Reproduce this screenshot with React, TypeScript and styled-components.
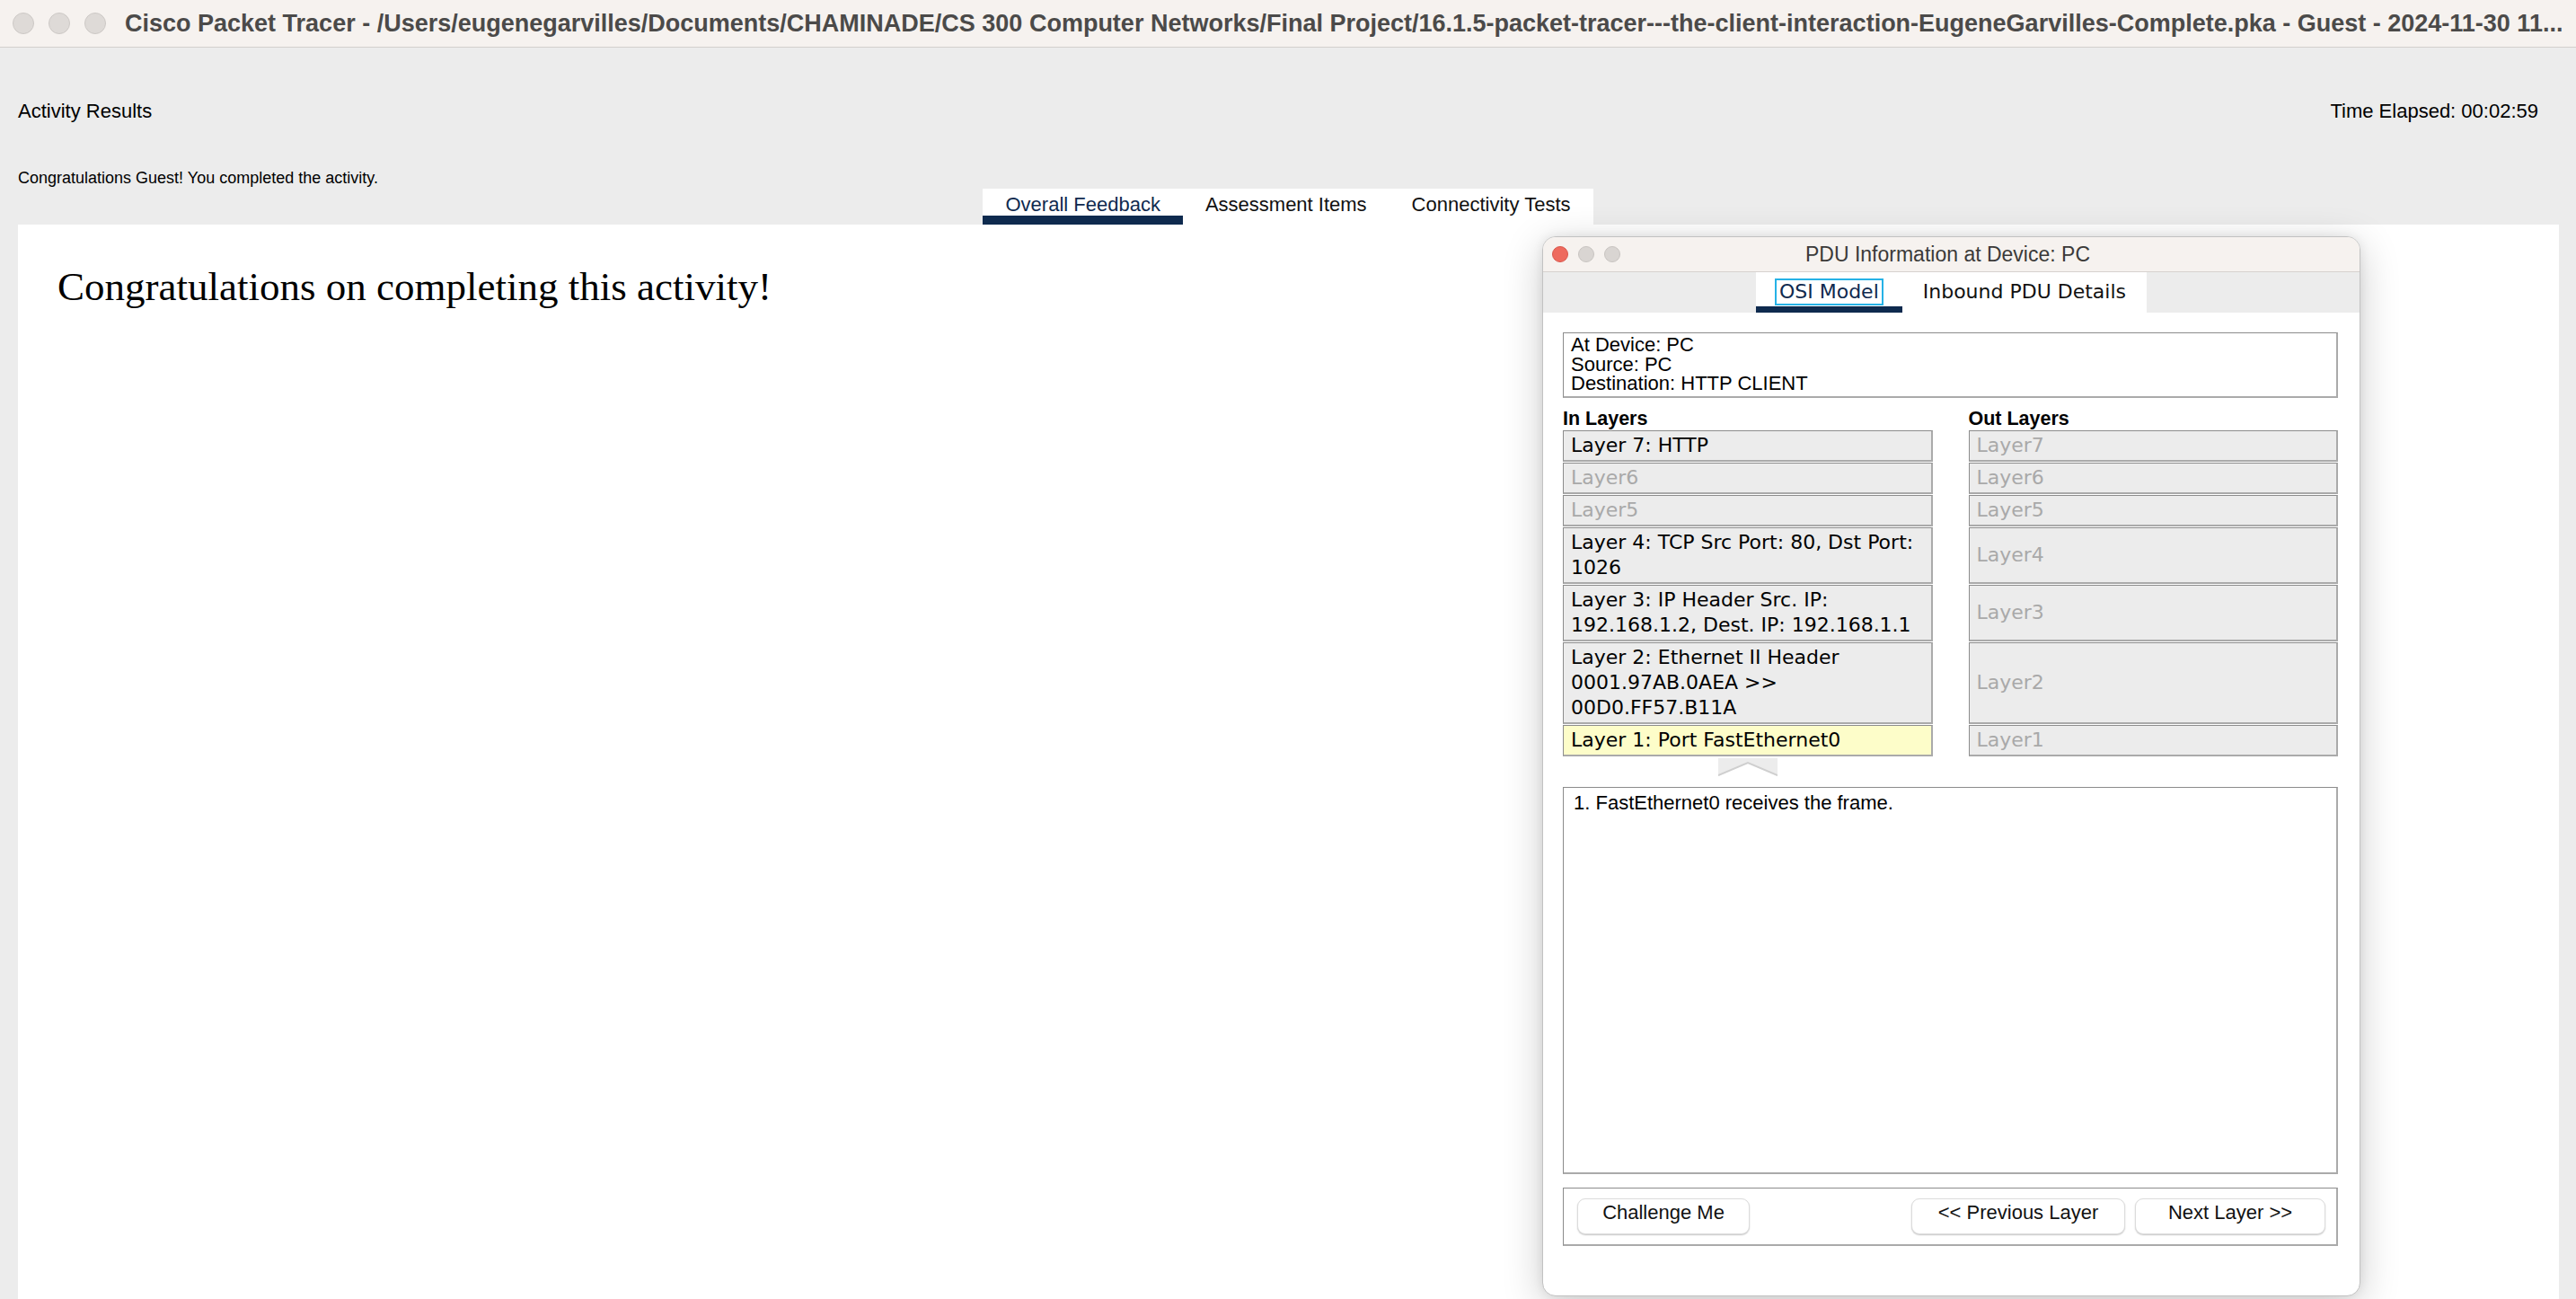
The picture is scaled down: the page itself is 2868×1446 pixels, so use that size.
import styled, { createGlobalStyle } from "styled-components";

const GlobalStyle = createGlobalStyle`
  html, body {
    margin: 0;
    padding: 0;
  }
  body {
    width: 2868px;
    height: 1446px;
    overflow: hidden;
    background: #ececec;
    font-family: "Liberation Sans", Arial, sans-serif;
    color: #000;
  }
  * {
    box-sizing: border-box;
  }
`;

const Screen = styled.div`
  position: relative;
  width: 2868px;
  height: 1446px;
  display: flex;
  flex-direction: column;
  background: #ececec;
  overflow: hidden;
`;

const WindowBar = styled.div`
  height: 53px;
  flex-shrink: 0;
  display: flex;
  align-items: center;
  padding-left: 14px;
  background: #f6f2ef;
  border-bottom: 1px solid #d3cfcc;
`;

const Lights = styled.div<{ $gap: number }>`
  display: flex;
  align-items: center;
  gap: ${(p) => p.$gap}px;
  flex-shrink: 0;
`;

const Light = styled.span<{ $size: number; $color: string; $edge: string }>`
  width: ${(p) => p.$size}px;
  height: ${(p) => p.$size}px;
  border-radius: 50%;
  background: ${(p) => p.$color};
  border: 1px solid ${(p) => p.$edge};
`;

const WindowTitle = styled.div`
  margin-left: 21px;
  font-size: 27px;
  font-weight: 700;
  color: #4b4a49;
  white-space: nowrap;
  overflow: hidden;
`;

const Header = styled.header`
  height: 157px;
  flex-shrink: 0;
  display: flex;
  flex-direction: column;
  padding: 0 42px 0 20px;
`;

const HeaderRow = styled.div`
  margin-top: 58px;
  display: flex;
  justify-content: space-between;
  align-items: center;
  font-size: 22px;
  line-height: 26px;
`;

const Notice = styled.div`
  margin-top: 50px;
  font-size: 18px;
  line-height: 22px;
`;

const TabRow = styled.nav`
  height: 40px;
  flex-shrink: 0;
  display: flex;
  justify-content: center;
`;

const Tab = styled.div<{ $active?: boolean }>`
  height: 40px;
  padding: 5px 25px 0;
  background: #fff;
  font-size: 22px;
  line-height: 26px;
  color: ${(p) => (p.$active ? "#0f2a4f" : "#111")};
  border-bottom: 10px solid ${(p) => (p.$active ? "#0e2a4e" : "#fff")};
`;

const Content = styled.main`
  flex: 1;
  margin: 0 19px 0 20px;
  background: #fff;
  padding: 44px 44px;
`;

const Heading = styled.h1`
  margin: 0;
  font-family: "Liberation Serif", "Times New Roman", serif;
  font-weight: 400;
  font-size: 45px;
  line-height: 51px;
`;

/* floating PDU window */
const Dialog = styled.section`
  position: absolute;
  left: 1717px;
  top: 263px;
  width: 911px;
  height: 1180px;
  display: flex;
  flex-direction: column;
  background: #fff;
  border: 1px solid #c2c2c2;
  border-radius: 15px;
  overflow: hidden;
  box-shadow: 0 10px 45px rgba(0, 0, 0, 0.2), 0 0 12px rgba(0, 0, 0, 0.08);
`;

const DialogBar = styled.div`
  height: 39px;
  flex-shrink: 0;
  display: grid;
  grid-template-columns: 1fr auto 1fr;
  align-items: center;
  padding: 0 10px;
  background: #f6f2ef;
  border-bottom: 1px solid #d6d2cf;
`;

const DialogTitle = styled.div`
  font-size: 23px;
  color: #3b3a39;
  white-space: nowrap;
  margin-right: 8px;
`;

const DialogTabs = styled.div`
  height: 45px;
  flex-shrink: 0;
  display: flex;
  justify-content: center;
  background: #ececec;
`;

const DTab = styled.div<{ $active?: boolean }>`
  height: 45px;
  padding: 9px 23px 0;
  background: #fff;
  font-family: "DejaVu Sans", Verdana, sans-serif;
  font-size: 22px;
  line-height: 26px;
  color: ${(p) => (p.$active ? "#0f2a4f" : "#111")};
  border-bottom: 7px solid ${(p) => (p.$active ? "#0e2a4e" : "#fff")};
`;

const Focus = styled.span`
  display: inline-block;
  padding: 0 3px;
  line-height: 26px;
  outline: 2px solid #26b2e6;
`;

const DialogBody = styled.div`
  flex: 1;
  display: flex;
  flex-direction: column;
  padding: 22px 24px 0 22px;
`;

const Inset = styled.div`
  border-style: solid;
  border-color: #8c8c8c #aaaaaa #aaaaaa #8c8c8c;
  border-width: 1px 2px 2px 1px;
`;

const InfoBox = styled(Inset)`
  padding: 2px 8px 3px;
  font-size: 22px;
  line-height: 21.5px;
`;

const LayerGrid = styled.div`
  margin-top: 11px;
  display: grid;
  grid-template-columns: 1fr 1fr;
  column-gap: 40px;
  row-gap: 1px;
`;

const ColumnLabel = styled.div`
  font-size: 21.5px;
  font-weight: 700;
  line-height: 24px;
`;

const LayerCell = styled(Inset)<{ $muted?: boolean; $hot?: boolean }>`
  display: flex;
  align-items: center;
  padding: 2px 8px;
  background: ${(p) => (p.$hot ? "#fdfdc9" : "#ececec")};
  color: ${(p) => (p.$muted ? "#a9a9a9" : "#000")};
  font-family: "DejaVu Sans", Verdana, sans-serif;
  font-size: 22px;
  line-height: 28px;
  white-space: nowrap;
  overflow: hidden;
`;

const Chevron = styled.svg`
  grid-column: 1;
  justify-self: center;
  margin-top: 1px;
  display: block;
`;

const MessageBox = styled(Inset)`
  margin-top: 12px;
  height: 431px;
  flex-shrink: 0;
  padding: 4px 11px;
  font-size: 22px;
  line-height: 26px;
`;

const ButtonBar = styled(Inset)`
  margin-top: 15px;
  height: 65px;
  flex-shrink: 0;
  display: flex;
  align-items: center;
  gap: 11px;
  padding: 0 12px 0 15px;
`;

const Button = styled.button<{ $w: number; $push?: boolean }>`
  width: ${(p) => p.$w}px;
  height: 40px;
  margin-left: ${(p) => (p.$push ? "auto" : "0")};
  padding: 0 0 7px;
  background: #fff;
  border: 1px solid #dcdcdc;
  border-radius: 9px;
  box-shadow: 0 1px 1.5px rgba(0, 0, 0, 0.22);
  font-family: "Liberation Sans", Arial, sans-serif;
  font-size: 22px;
  color: #111;
`;

type Layer = { text: string[]; muted?: boolean; hot?: boolean };

const rows: { inL: Layer; outL: string }[] = [
  { inL: { text: ["Layer 7: HTTP"] }, outL: "Layer7" },
  { inL: { text: ["Layer6"], muted: true }, outL: "Layer6" },
  { inL: { text: ["Layer5"], muted: true }, outL: "Layer5" },
  { inL: { text: ["Layer 4: TCP Src Port: 80, Dst Port:", "1026"] }, outL: "Layer4" },
  {
    inL: { text: ["Layer 3: IP Header Src. IP:", "192.168.1.2, Dest. IP: 192.168.1.1"] },
    outL: "Layer3",
  },
  {
    inL: { text: ["Layer 2: Ethernet II Header", "0001.97AB.0AEA >>", "00D0.FF57.B11A"] },
    outL: "Layer2",
  },
  { inL: { text: ["Layer 1: Port FastEthernet0"], hot: true }, outL: "Layer1" },
];

const LayerText = ({ lines }: { lines: string[] }) => (
  <div>
    {lines.map((l, i) => (
      <div key={i}>{l}</div>
    ))}
  </div>
);

export default function App() {
  return (
    <>
      <GlobalStyle />
      <Screen>
        <WindowBar>
          <Lights $gap={16}>
            <Light $size={24} $color="#dedad7" $edge="#cdc9c6" />
            <Light $size={24} $color="#dedad7" $edge="#cdc9c6" />
            <Light $size={24} $color="#dedad7" $edge="#cdc9c6" />
          </Lights>
          <WindowTitle>
            Cisco Packet Tracer - /Users/eugenegarvilles/Documents/CHAMINADE/CS 300 Computer
            Networks/Final Project/16.1.5-packet-tracer---the-client-interaction-EugeneGarvilles-Complete.pka
            - Guest - 2024-11-30 11...
          </WindowTitle>
        </WindowBar>

        <Header>
          <HeaderRow>
            <span>Activity Results</span>
            <span>Time Elapsed: 00:02:59</span>
          </HeaderRow>
          <Notice>Congratulations Guest! You completed the activity.</Notice>
        </Header>

        <TabRow>
          <Tab $active>Overall Feedback</Tab>
          <Tab>Assessment Items</Tab>
          <Tab>Connectivity Tests</Tab>
        </TabRow>

        <Content>
          <Heading>Congratulations on completing this activity!</Heading>
        </Content>

        <Dialog>
          <DialogBar>
            <Lights $gap={11}>
              <Light $size={18} $color="#ee6a5e" $edge="#d9584d" />
              <Light $size={18} $color="#d9d5d2" $edge="#c8c4c1" />
              <Light $size={18} $color="#d9d5d2" $edge="#c8c4c1" />
            </Lights>
            <DialogTitle>PDU Information at Device: PC</DialogTitle>
            <span />
          </DialogBar>

          <DialogTabs>
            <DTab $active>
              <Focus>OSI Model</Focus>
            </DTab>
            <DTab>Inbound PDU Details</DTab>
          </DialogTabs>

          <DialogBody>
            <InfoBox>
              <div>At Device: PC</div>
              <div>Source: PC</div>
              <div>Destination: HTTP CLIENT</div>
            </InfoBox>

            <LayerGrid>
              <ColumnLabel>In Layers</ColumnLabel>
              <ColumnLabel>Out Layers</ColumnLabel>
              {rows.map((r, i) => [
                <LayerCell key={`in-${i}`} $muted={r.inL.muted} $hot={r.inL.hot}>
                  <LayerText lines={r.inL.text} />
                </LayerCell>,
                <LayerCell key={`out-${i}`} $muted>
                  {r.outL}
                </LayerCell>,
              ])}
              <Chevron width="66" height="20" viewBox="0 0 66 20">
                <rect width="66" height="20" fill="#ececec" />
                <polygon points="0,20 33,5 66,20" fill="#ffffff" />
                <polyline points="0,19 33,5 66,19" fill="none" stroke="#cfcfcf" strokeWidth="2" />
              </Chevron>
            </LayerGrid>

            <MessageBox>1. FastEthernet0 receives the frame.</MessageBox>

            <ButtonBar>
              <Button $w={192}>Challenge Me</Button>
              <Button $w={238} $push>
                &lt;&lt; Previous Layer
              </Button>
              <Button $w={212}>Next Layer &gt;&gt;</Button>
            </ButtonBar>
          </DialogBody>
        </Dialog>
      </Screen>
    </>
  );
}
